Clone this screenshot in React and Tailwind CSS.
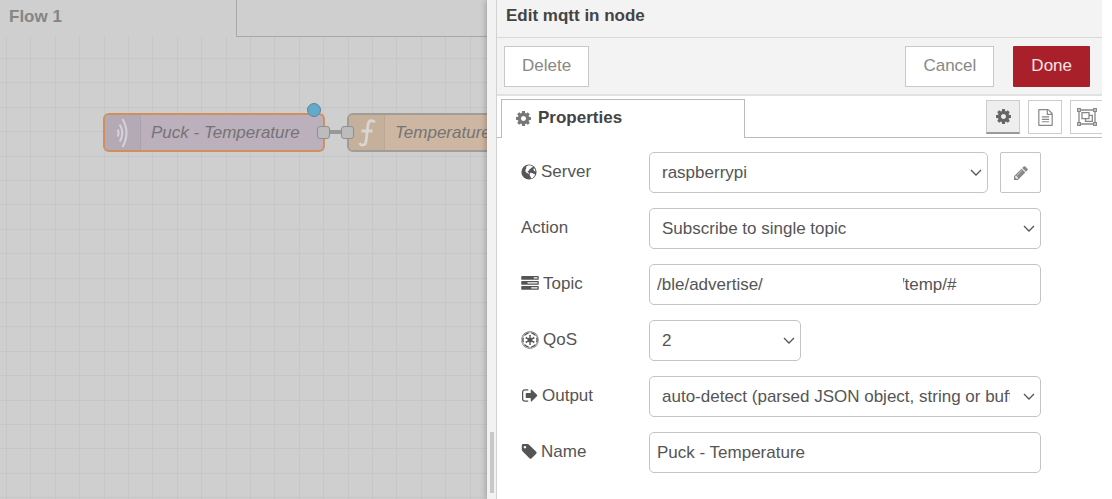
import React from "react";
import { FaEmpire } from "react-icons/fa";

const paths = {
  cog: "M1152 896q0-106-75-181t-181-75-181 75-75 181 75 181 181 75 181-75 75-181zm512-109v222q0 12-8 23t-20 13l-185 28q-19 54-39 91 35 50 107 138 10 12 10 25t-9 23q-27 37-99 108t-94 71q-12 0-26-9l-138-108q-44 23-91 38-16 136-29 186-7 28-36 28h-222q-14 0-24.5-8.5t-11.5-21.5l-28-184q-49-16-90-37l-141 107q-10 9-25 9-14 0-25-11-126-114-165-168-7-10-7-23 0-12 8-23 15-21 51-66.5t54-70.5q-27-50-41-99l-183-27q-13-2-21-12.5t-8-23.5v-222q0-12 8-23t19-13l186-28q14-46 39-92-40-57-107-138-10-12-10-24 0-10 9-23 26-36 98.500-107.500t94.500-71.500q13 0 26 10l138 107q44-23 91-38 16-136 29-186 7-28 36-28h222q14 0 24.500 8.500t11.500 21.500l28 184q49 16 90 37l142-107q9-9 24-9 13 0 25 10 129 119 165 170 7 8 7 22 0 12-8 23-15 21-51 66.500t-54 70.500q26 50 41 98l183 28q13 2 21 12.500t8 23.500z",
  signOut: "M704 1440q0 4 1 20t.5 26.5-3 23.5-10 19.5-20.500 6.500h-320q-119 0-203.500-84.500t-84.500-203.500v-704q0-119 84.500-203.500t203.500-84.500h320q13 0 22.500 9.500t9.500 22.500q0 4 1 20t.5 26.500-3 23.500-10 19.500-20.500 6.500h-320q-66 0-113 47t-47 113v704q0 66 47 113t113 47h312l11.500 1 11.500 3 8 5.500 7 9 2 13.500zm928-544q0 26-19 45l-544 544q-19 19-45 19t-45-19-19-45v-288h-448q-26 0-45-19t-19-45v-384q0-26 19-45t45-19h448v-288q0-26 19-45t45-19 45 19l544 544q19 19 19 45z",
  tag: "M576 448q0-53-37.500-90.500t-90.500-37.500-90.500 37.500-37.500 90.500 37.500 90.500 90.500 37.500 90.500-37.500 37.500-90.500zm1067 576q0 53-37 90l-491 492q-39 37-91 37-53 0-90-37l-715-716q-38-37-64.500-101t-26.500-117v-416q0-52 38-90t90-38h416q53 0 117 26.500t102 64.500l715 714q37 39 37 91z",
  pencil: "M491 1536l91-91-235-235-91 91v107h128v128h107zm523-928q0-22-22-22-10 0-17 7l-542 542q-7 7-7 17 0 22 22 22 10 0 17-7l542-542q7-7 7-17zm-54-192l416 416-832 832h-416v-416zm683 96q0 53-37 90l-166 166-416-416 166-165q36-38 90-38 53 0 91 38l235 234q37 39 37 91z",
  tasks: "M1024 1408h640v-128h-640v128zm-384-512h1024v-128h-1024v128zm640-512h384v-128h-384v128zm512 832v256q0 26-19 45t-45 19h-1664q-26 0-45-19t-19-45v-256q0-26 19-45t45-19h1664q26 0 45 19t19 45zm0-512v256q0 26-19 45t-45 19h-1664q-26 0-45-19t-19-45v-256q0-26 19-45t45-19h1664q26 0 45 19t19 45zm0-512v256q0 26-19 45t-45 19h-1664q-26 0-45-19t-19-45v-256q0-26 19-45t45-19h1664q26 0 45 19t19 45z",
  fileText: "M1596 380q28 28 48 76t20 88v1152q0 40-28 68t-68 28h-1344q-40 0-68-28t-28-68v-1600q0-40 28-68t68-28h896q40 0 88 20t76 48zm-444-244v376h376q-10-29-22-41l-313-313q-12-12-41-22zm384 1528v-1024h-416q-40 0-68-28t-28-68v-416h-768v1536h1280zm-1024-864q0-14 9-23t23-9h704q14 0 23 9t9 23v64q0 14-9 23t-23 9h-704q-14 0-23-9t-9-23v-64zm736 224q14 0 23 9t9 23v64q0 14-9 23t-23 9h-704q-14 0-23-9t-9-23v-64q0-14 9-23t23-9h704zm0 256q14 0 23 9t9 23v64q0 14-9 23t-23 9h-704q-14 0-23-9t-9-23v-64q0-14 9-23t23-9h704z",
};

function Glyph({ name, box = "128 128 1536 1536", className }) {
  return (
    <svg viewBox={box} className={className} fill="currentColor" aria-hidden="true">
      <path d={paths[name]} />
    </svg>
  );
}

function GlobeIcon({ className }) {
  return (
    <svg viewBox="0 0 16 16" className={className} aria-hidden="true">
      <circle cx="8" cy="8" r="7.6" fill="currentColor" />
      <path
        d="M7.600 1.300l2.400.2 1.900 1-.5 1.100-1.300.1-.5 1-1.200.6-.2 1.200-1.300.6-.4.9 1.100.5.6.7-.7.6-1.900-1-1.200-1.300.2-2 .9-1.700-.7-.7 1.200-1zM9.300 8.800l1.900.2 1.900 1.100 1 .2-.6 1.800-1.600 1.600-2 .9-.3-1.800-.9-1.500-.1-1.300zM13 4.100l1.100 1.700.4 1.700-1.300-.5-.9-1.400z"
        fill="#fff"
      />
    </svg>
  );
}

function GroupIcon({ className }) {
  return (
    <svg viewBox="0 0 20 18" className={className} fill="none" stroke="currentColor" strokeWidth="1.300" aria-hidden="true">
      <path d="M3.500 2h13M3.500 16h13M2 3.500v11M18 3.500v11" />
      <path d="M.7.7h2.600v2.600H.7zM16.700.7h2.600v2.600h-2.600zM.7 14.700h2.600v2.600H.7zM16.700 14.700h2.600v2.600h-2.600z" />
      <path d="M5 4.600h7v6H5zM12.300 7.400h3v6H8.500v-2.600" />
    </svg>
  );
}

function Select({ id, value, className }) {
  return (
    <div className={"relative min-w-0 " + className}>
      <select
        id={id}
        defaultValue={value}
        className="block h-[41px] w-full appearance-none rounded-[5px] border border-[#c4c4c4] bg-white pr-[30px] pl-3 text-[17px] text-clip text-[#555]"
      >
        <option>{value}</option>
      </select>
      <svg viewBox="0 0 12 8" className="pointer-events-none absolute top-[17px] right-[6px] h-2 w-3" fill="none" stroke="#555" strokeWidth="1.300" aria-hidden="true">
        <path d="M1 1l5 5 5-5" />
      </svg>
    </div>
  );
}

function Row({ id, icon, label, children }) {
  return (
    <div className="flex items-center">
      <label htmlFor={id} className="flex w-32 shrink-0 items-center gap-1 pb-0.5 text-[#555]">
        {icon}
        {label}
      </label>
      {children}
    </div>
  );
}

const inputClass =
  "block h-[41px] w-full rounded-[5px] border border-[#c4c4c4] bg-white px-[7px] text-[17px] text-[#555]";

const redactedGap = "\u00a0".repeat(29);

function Canvas() {
  const steps = Array.from({ length: 100 }, (_, i) => i);
  return (
    <div className="relative flex-1 overflow-hidden">
      <svg className="absolute inset-0 h-full w-full" stroke="#c7c7c7" aria-hidden="true">
        {steps.map((i) => {
          const x = Math.round(7 + i * 24.4) - 0.5;
          return <line key={"v" + i} x1={x} x2={x} y1="0" y2="100%" />;
        })}
        {steps.map((i) => {
          const y = Math.round(22 + i * 24.4) - 0.5;
          return <line key={"h" + i} x1="0" x2="100%" y1={y} y2={y} />;
        })}
      </svg>

      <div className="absolute top-[93px] left-[325px] h-1 w-6 bg-[#999]" />

      <div className="absolute top-[76px] left-[103px] flex h-[39px] w-[222px] items-center overflow-hidden rounded-[6px] border-2 border-[#d08f5c] bg-[#bcb0bd] text-[17px] text-[#747474] italic">
        <div className="flex h-full w-9 items-center justify-center border-r border-[#aaa1ad] bg-[#b3aab6]">
          <svg viewBox="0 0 12 30" className="h-[30px] w-3" fill="none" stroke="#d6d3d8" strokeWidth="2" aria-hidden="true">
            <path d="M.5 11.500q2.200 3.500 0 7M2.800 6.500q5 8.500 0 17M5.500 1q8 14 0 28" />
          </svg>
        </div>
        <span className="pl-[10px] whitespace-nowrap">Puck - Temperature</span>
      </div>

      <div className="absolute top-[76px] left-[347px] flex h-[39px] w-[222px] items-center overflow-hidden rounded-[6px] border-2 border-[#a09c98] bg-[#cdb7a2] text-[17px] text-[#747474] italic">
        <div className="flex h-full w-9 items-center justify-center border-r border-[#bba893] bg-[#c5b09c]">
          <svg viewBox="0 0 18 28" className="h-7 w-[18px]" fill="none" stroke="#d9d6d3" strokeWidth="2.800" aria-hidden="true">
            <path d="M16.500 3.500q-1-2.300-3.500-1.800-2.500.5-3 4l-1.800 15.800q-.5 4-3 4.500-2.500.5-3.700-2M3.500 12h11" />
          </svg>
        </div>
        <span className="pl-[10px] whitespace-nowrap">Temperature</span>
      </div>

      <div className="absolute top-[89px] left-[317px] size-[13px] rounded-[3px] border border-[#8f8f8f] bg-[#bcbcbc]" />
      <div className="absolute top-[89px] left-[341px] size-[13px] rounded-[3px] border border-[#8f8f8f] bg-[#bcbcbc]" />
      <div className="absolute top-[66px] left-[307px] size-[14px] rounded-full border border-[#5f8498] bg-[#63a9cc]" />
    </div>
  );
}

export default function App() {
  return (
    <div className="min-h-screen bg-white pr-[10px] font-['Liberation_Sans',Arial,sans-serif] text-[17px]">
      <div className="grid min-h-screen grid-cols-[487fr_615fr] overflow-hidden">
        <section className="flex min-w-0 flex-col overflow-hidden bg-[#cfcfcf]">
          <div className="flex h-[37px]">
            <button className="w-[236px] pb-1 pl-[9px] text-left text-[17px] font-bold text-[#858585]">Flow 1</button>
            <div className="flex-1 border-b border-l border-[#a8a8a8]" />
          </div>
          <Canvas />
        </section>

        <section className="z-10 flex min-w-0 bg-white shadow-[-1px_0_6px_rgba(0,0,0,0.25)]">
          <div className="flex w-[10px] shrink-0 flex-col items-center justify-end border-r border-[#d2d2d2] bg-[#f2f2f2] pb-[6px]">
            <div className="h-[61px] w-1 bg-[#c8c8c8]" />
          </div>

          <div className="flex min-w-0 flex-1 flex-col overflow-hidden">
            <h1 className="flex h-[38px] items-center border-b border-[#d8d8d8] bg-[#f3f3f3] pb-[6px] pl-[9px] text-[17px] font-bold text-[#444]">
              Edit mqtt in node
            </h1>

            <div className="flex h-[58px] items-center border-b-2 border-[#e2e2e2] bg-[#f3f3f3] pr-3 pl-[7px]">
              <button className="h-[41px] border border-[#c8c8c8] bg-white px-[17px] text-[17px] text-[#888]">Delete</button>
              <div className="ml-auto flex gap-[19px]">
                <button className="h-[41px] border border-[#c8c8c8] bg-white px-[17px] text-[17px] text-[#888]">Cancel</button>
                <button className="h-[41px] rounded-[1px] bg-[#a9202a] px-[18px] text-[17px] text-[#f0e6e7]">Done</button>
              </div>
            </div>

            <div className="flex h-[42px] pt-[3px]">
              <div className="w-1 border-b border-[#bbb]" />
              <button className="flex w-[244px] items-center gap-[7px] border-x border-t border-[#bbb] pb-0.5 pl-[14px] text-[17px] font-bold text-[#444]">
                <Glyph name="cog" className="size-[15px] text-[#777]" />
                Properties
              </button>
              <div className="-mr-0.5 flex flex-1 justify-end gap-2 border-b border-[#bbb] pt-px">
                <button aria-label="Properties" className="flex size-[34px] items-center justify-center border border-b-2 border-[#ccc] border-b-[#999] bg-[#eee] text-[#666]">
                  <Glyph name="cog" className="size-[15px]" />
                </button>
                <button aria-label="Description" className="flex size-[34px] items-center justify-center border border-[#ccc] bg-white text-[#888]">
                  <Glyph name="fileText" box="128 0 1536 1792" className="h-[17px] w-[15px]" />
                </button>
                <button aria-label="Appearance" className="flex size-[34px] items-center justify-center border border-[#ccc] bg-white text-[#888]">
                  <GroupIcon className="h-[18px] w-5" />
                </button>
              </div>
            </div>

            <form className="flex flex-col gap-[15px] pt-[14px] pr-[61px] pb-6 pl-6">
              <Row id="server" label="Server" icon={<GlobeIcon className="size-4" />}>
                <Select id="server" value="raspberrypi" className="flex-1" />
                <button type="button" aria-label="Edit server" className="ml-3 flex h-[41px] w-[41px] items-center justify-center rounded-[2px] border border-[#c4c4c4] bg-white text-[#888]">
                  <Glyph name="pencil" className="size-[14px]" />
                </button>
              </Row>
              <Row id="action" label="Action">
                <Select id="action" value="Subscribe to single topic" className="flex-1" />
              </Row>
              <Row id="topic" label="Topic" icon={<Glyph name="tasks" box="0 128 1792 1536" className="h-[15px] w-[18px]" />}>
                <div className="relative min-w-0 flex-1">
                  <input id="topic" type="text" className={inputClass} defaultValue={"/ble/advertise/" + redactedGap + "/temp/#"} />
                  <div className="absolute top-2 left-[116px] h-6 w-[138px] bg-white" />
                </div>
              </Row>
              <Row id="qos" label="QoS" icon={<FaEmpire className="size-[18px]" aria-hidden="true" />}>
                <Select id="qos" value="2" className="w-[152px]" />
              </Row>
              <Row id="output" label="Output" icon={<Glyph name="signOut" box="0 128 1664 1536" className="h-[15px] w-[17px]" />}>
                <Select id="output" value="auto-detect (parsed JSON object, string or buffer)" className="flex-1" />
              </Row>
              <Row id="name" label="Name" icon={<Glyph name="tag" box="64 128 1600 1536" className="h-[15px] w-4" />}>
                <input id="name" type="text" className={inputClass} defaultValue="Puck - Temperature" />
              </Row>
            </form>
          </div>
        </section>
      </div>
    </div>
  );
}
